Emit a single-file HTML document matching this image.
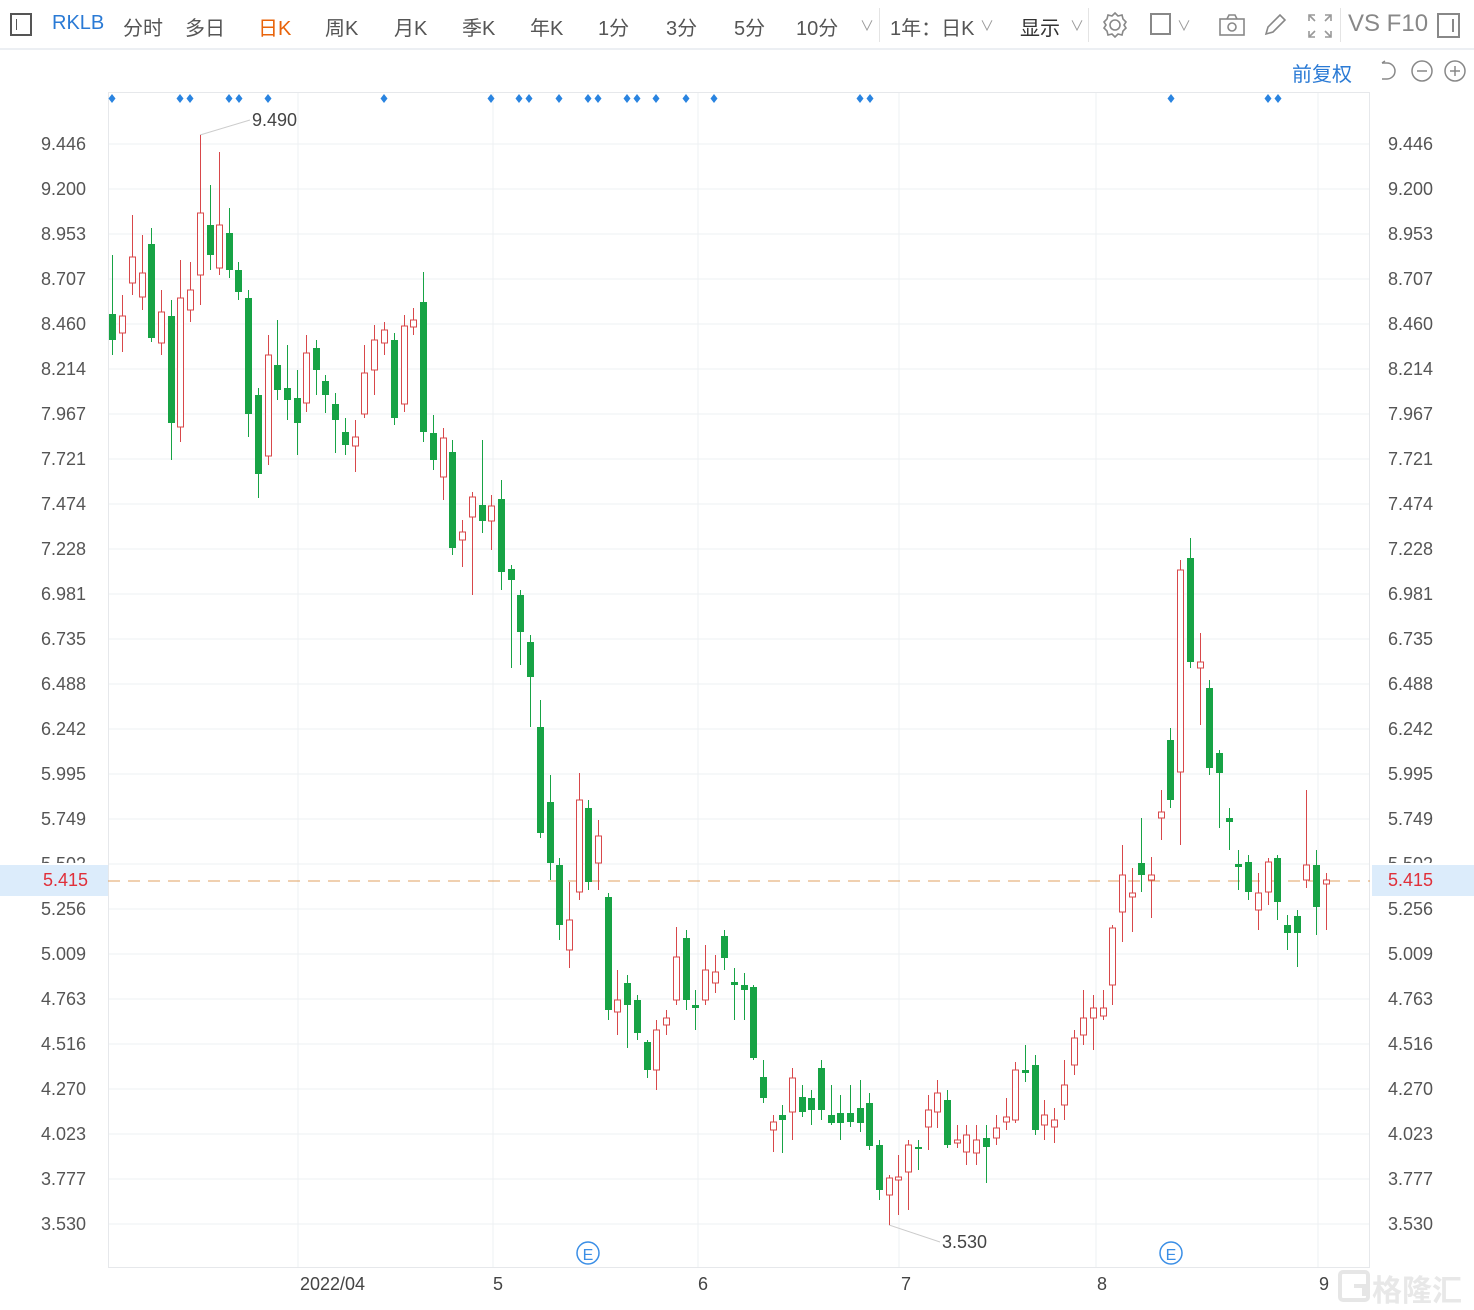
<!DOCTYPE html><html><head><meta charset="utf-8"><style>
body{margin:0;width:1474px;height:1310px;background:#fff;font-family:"Liberation Sans","Noto Sans CJK SC",sans-serif;overflow:hidden;position:relative}
.tb{position:absolute;left:0;top:0;width:1474px;height:48px;border-bottom:2px solid #eceff3;}
.tb span{position:absolute;top:12px;font-size:20px;color:#555;}
.ax{position:absolute;font-size:18px;color:#444;}
</style></head><body>
<div class="tb">
<div style="position:absolute;left:10px;top:13px;width:22px;height:23px;border:2px solid #555;box-sizing:border-box"><div style="position:absolute;left:4px;top:4px;width:1px;height:11px;background:#555"></div></div>
<span style="left:52px;color:#2a7ad5">RKLB</span>
<span style="left:123px">分时</span><span style="left:185px">多日</span><span style="left:258px;color:#e8630a">日K</span>
<span style="left:325px">周K</span><span style="left:394px">月K</span><span style="left:462px">季K</span><span style="left:530px">年K</span>
<span style="left:598px">1分</span><span style="left:666px">3分</span><span style="left:734px">5分</span><span style="left:796px">10分</span>
<span style="left:860px;font-size:14px;top:16px;color:#999">∨</span>
<div style="position:absolute;left:879px;top:8px;width:1px;height:34px;background:#e4e4e4"></div>
<span style="left:890px">1年：日K</span><span style="left:980px;font-size:14px;top:16px;color:#999">∨</span>
<span style="left:1020px;color:#333">显示</span><span style="left:1070px;font-size:14px;top:16px;color:#999">∨</span>
<div style="position:absolute;left:1088px;top:8px;width:1px;height:34px;background:#e4e4e4"></div>
<svg style="position:absolute;left:1100px;top:10px" width="30" height="30" viewBox="0 0 30 30"><circle cx="15" cy="15" r="5" fill="none" stroke="#888" stroke-width="1.6"/><path d="M15 3l3 3 4-1 1 4 3 3-2 3 2 3-3 3-1 4-4-1-3 3-3-3-4 1-1-4-3-3 2-3-2-3 3-3 1-4 4 1z" fill="none" stroke="#888" stroke-width="1.6"/></svg>
<div style="position:absolute;left:1150px;top:13px;width:21px;height:22px;border:2px solid #888;box-sizing:border-box"></div>
<span style="left:1177px;font-size:14px;top:16px;color:#999">∨</span>
<svg style="position:absolute;left:1218px;top:12px" width="30" height="26"><rect x="2" y="7" width="24" height="16" fill="none" stroke="#888" stroke-width="1.6"/><path d="M9 7l2-4h6l2 4" fill="none" stroke="#888" stroke-width="1.6"/><circle cx="14" cy="15" r="4" fill="none" stroke="#888" stroke-width="1.6"/></svg>
<svg style="position:absolute;left:1262px;top:12px" width="26" height="26"><path d="M4 22l2-7L18 3l5 5L11 20z" fill="none" stroke="#888" stroke-width="1.6"/></svg>
<svg style="position:absolute;left:1306px;top:12px" width="28" height="28"><path d="M3 9V3h6M19 3h6v6M25 19v6h-6M9 25H3v-6M3 3l6 6M25 3l-6 6M25 25l-6-6M3 25l6-6" fill="none" stroke="#999" stroke-width="1.6"/></svg>
<div style="position:absolute;left:1340px;top:8px;width:1px;height:34px;background:#e4e4e4"></div>
<span style="left:1348px;font-size:24px;top:10px;color:#888">VS F10</span>
<div style="position:absolute;left:1437px;top:13px;width:23px;height:25px;border:2px solid #888;box-sizing:border-box"><div style="position:absolute;right:4px;top:4px;width:2px;height:13px;background:#888"></div></div>
</div>
<span style="position:absolute;left:1292px;top:58px;font-size:20px;color:#2a7ad5">前复权</span>
<svg style="position:absolute;left:1374px;top:58px" width="100" height="28"><path d="M8 5h5a8 8 0 0 1 0 16H8" fill="none" stroke="#888" stroke-width="1.5"/><path d="M8 5l3-2" stroke="#888" stroke-width="1.5"/><circle cx="48" cy="13" r="10" fill="none" stroke="#888" stroke-width="1.5"/><path d="M43 13h10" stroke="#888" stroke-width="1.5"/><circle cx="81" cy="13" r="10" fill="none" stroke="#888" stroke-width="1.5"/><path d="M76 13h10M81 8v10" stroke="#888" stroke-width="1.5"/></svg>
<svg id="c" style="position:absolute;left:0;top:0" width="1474" height="1310"></svg>
<div style="position:absolute;left:0;top:865px;width:108px;height:31px;background:#dcecfb"></div>
<div style="position:absolute;left:1372px;top:865px;width:102px;height:31px;background:#dcecfb"></div>
<div id="lab"></div>
<span class="ax" style="left:300px;top:1274px">2022/04</span><span class="ax" style="left:493px;top:1274px">5</span><span class="ax" style="left:698px;top:1274px">6</span><span class="ax" style="left:901px;top:1274px">7</span><span class="ax" style="left:1097px;top:1274px">8</span><span class="ax" style="left:1319px;top:1274px">9</span>
<span class="ax" style="left:252px;top:110px">9.490</span><span class="ax" style="left:942px;top:1232px">3.530</span>
<svg style="position:absolute;left:1336px;top:1268px" width="130" height="36"><rect x="4" y="4" width="28" height="28" rx="3" fill="none" stroke="#e6e6e6" stroke-width="4"/><path d="M18 18h10v10" fill="none" stroke="#e6e6e6" stroke-width="4"/></svg>
<div style="position:absolute;left:1372px;top:1266px;font-size:30px;color:#e8e8e8;font-weight:bold;white-space:nowrap">格隆汇</div>
<script>
var s='',g='#eef0f3';
var L=document.getElementById('lab'),lh='';
var ps=['9.446','9.200','8.953','8.707','8.460','8.214','7.967','7.721','7.474','7.228','6.981','6.735','6.488','6.242','5.995','5.749','5.502','5.256','5.009','4.763','4.516','4.270','4.023','3.777','3.530'];
ps.forEach(function(p,i){var y=144+45*i;s+='<line x1="108" x2="1370" y1="'+y+'" y2="'+y+'" stroke="'+g+'"/>';
if(p!='5.502'){lh+='<span class="ax" style="left:41px;top:'+(y-10)+'px;color:#555">'+p+'</span><span class="ax" style="left:1388px;top:'+(y-10)+'px;color:#555">'+p+'</span>';}
else{lh+='<span class="ax" style="left:41px;top:'+(y-10)+'px;color:#555;height:9px;overflow:hidden">'+p+'</span><span class="ax" style="left:1388px;top:'+(y-10)+'px;color:#555;height:9px;overflow:hidden">'+p+'</span>';}});
lh+='<span class="ax" style="left:43px;top:870px;color:#e0303a">5.415</span><span class="ax" style="left:1388px;top:870px;color:#e0303a">5.415</span>';
L.innerHTML=lh;
[298,493,698,899,1096,1318].forEach(function(x){s+='<line x1="'+x+'" x2="'+x+'" y1="92" y2="1267" stroke="'+g+'"/>'});
s+='<rect x="108.5" y="92.5" width="1261" height="1175" fill="none" stroke="#e6e8eb"/>';
s+='<line x1="108" x2="1370" y1="881" y2="881" stroke="#e0a060" stroke-dasharray="12,8"/>';
s+='<line x1="200" y1="135" x2="250" y2="120" stroke="#ccc"/><line x1="889" y1="1225" x2="940" y2="1242" stroke="#ccc"/>';
[112,180,190,229,239,268,384,491,519,529,559,588,598,627,637,656,686,714,860,870,1171,1268,1278].forEach(function(x){s+='<path d="M'+x+' 94l3.5 4.5-3.5 4.5-3.5-4.5z" fill="#2a84e0"/>'});
[588,1171].forEach(function(x){s+='<circle cx="'+x+'" cy="1253" r="11" fill="#fff" stroke="#3a8ee6" stroke-width="1.5"/><text x="'+x+'" y="1260" font-size="16" text-anchor="middle" fill="#3a8ee6" font-family="Liberation Sans">E</text>'});
var d=`112 g 314 340 255 355
122 r 316 333 295 352
132 r 257 283 215 295
142 r 273 297 235 310
151 g 244 338 228 342
161 r 312 343 290 355
171 g 316 423 300 460
180 r 298 427 260 442
190 r 290 310 262 322
200 r 213 275 135 305
210 g 225 255 185 270
219 r 225 268 152 275
229 g 233 270 208 278
238 g 270 292 262 300
248 g 298 414 290 437
258 g 395 474 388 498
268 r 355 456 335 465
277 g 365 390 320 400
287 g 388 400 345 420
297 g 398 423 370 455
306 r 353 403 335 412
316 g 348 370 340 395
325 g 381 395 375 413
335 g 404 420 393 453
345 g 432 445 418 455
355 r 437 446 420 472
364 r 373 414 345 418
374 r 340 370 325 395
384 r 330 343 322 355
394 g 340 418 333 425
404 r 326 404 315 412
413 r 320 327 308 335
423 g 302 432 272 442
433 g 433 460 415 470
443 r 438 477 428 500
452 g 452 548 440 555
462 r 532 540 520 567
472 r 497 517 492 595
482 g 505 521 440 533
491 r 506 521 495 550
501 g 499 572 480 590
511 g 569 580 565 668
520 g 595 632 590 665
530 g 642 677 635 727
540 g 727 833 700 838
550 g 802 863 775 880
559 g 865 925 858 940
569 r 920 950 882 968
579 r 800 892 773 900
588 g 808 882 800 890
598 r 836 863 820 890
608 g 897 1010 893 1020
617 r 1000 1012 970 1035
627 g 983 1005 975 1048
637 g 1000 1033 995 1040
647 g 1042 1070 1040 1078
656 r 1030 1070 1020 1090
666 r 1018 1025 1010 1035
676 r 957 1000 927 1005
686 g 938 1000 930 1010
695 g 1005 1008 990 1030
705 r 970 1000 945 1005
715 r 972 983 955 993
724 g 936 958 930 970
734 g 982 985 968 1020
744 g 985 990 973 1020
753 g 987 1058 985 1060
763 g 1077 1098 1060 1103
773 r 1122 1130 1115 1152
782 g 1115 1120 1105 1153
792 r 1078 1112 1068 1140
802 g 1097 1112 1085 1117
811 g 1098 1110 1090 1125
821 g 1068 1110 1060 1120
831 g 1115 1123 1085 1125
840 g 1113 1123 1095 1140
850 g 1113 1122 1085 1127
860 g 1108 1123 1080 1132
869 g 1103 1146 1093 1150
879 g 1145 1190 1140 1200
889 r 1178 1195 1175 1225
898 r 1177 1180 1155 1215
908 r 1145 1172 1140 1210
918 g 1147 1149 1140 1170
928 r 1110 1127 1095 1150
937 r 1093 1112 1080 1128
947 g 1100 1145 1090 1148
957 r 1140 1143 1125 1148
966 r 1135 1152 1125 1165
976 r 1140 1153 1125 1165
986 g 1138 1147 1125 1183
996 r 1128 1138 1115 1145
1006 r 1117 1122 1098 1130
1015 r 1070 1120 1062 1123
1025 g 1070 1073 1045 1082
1035 g 1065 1130 1055 1135
1044 r 1115 1125 1100 1140
1054 r 1120 1127 1108 1143
1064 r 1085 1105 1060 1120
1074 r 1038 1065 1030 1075
1083 r 1018 1035 990 1045
1093 r 1008 1018 995 1050
1103 r 1008 1016 990 1020
1112 r 928 985 925 1005
1122 r 875 912 845 942
1132 r 893 897 868 932
1141 g 863 875 818 892
1151 r 875 880 857 918
1161 r 812 818 790 840
1170 g 740 800 728 808
1180 r 570 772 560 845
1190 g 558 662 538 668
1200 r 662 668 633 725
1209 g 688 768 680 775
1219 g 753 773 750 828
1229 g 818 822 808 850
1238 g 864 867 850 890
1248 g 862 892 855 900
1258 r 893 910 873 930
1268 r 862 892 858 905
1277 g 858 902 855 920
1287 g 925 933 915 950
1297 g 916 933 910 967
1306 r 865 880 790 888
1316 g 865 907 850 935
1326 r 880 884 873 930`;
d.split('\n').forEach(function(l){var a=l.trim().split(/\s+/),x=+a[0],c=a[1]=='g'?'#17a345':'#d8474a',t=+a[2],b=+a[3],h=+a[4],w=+a[5];
s+='<line x1="'+(x+.5)+'" x2="'+(x+.5)+'" y1="'+h+'" y2="'+w+'" stroke="'+c+'"/>';
if(a[1]=='g')s+='<rect x="'+(x-3)+'" y="'+t+'" width="7" height="'+Math.max(2,b-t)+'" fill="'+c+'"/>';
else s+='<rect x="'+(x-2.5)+'" y="'+t+'" width="6" height="'+Math.max(2,b-t)+'" fill="#fff" stroke="'+c+'"/>';});
document.getElementById('c').innerHTML=s;
</script>
</body></html>
